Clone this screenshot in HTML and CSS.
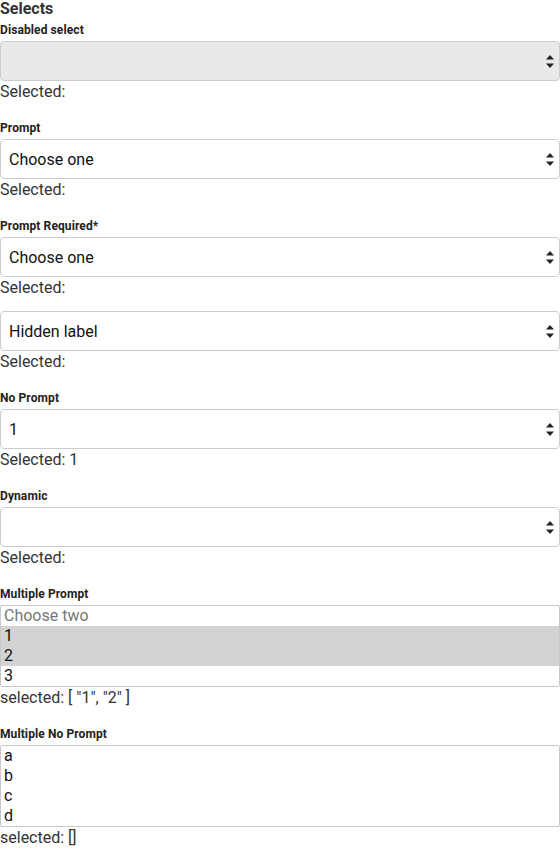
FILE: index.html
```html
<!DOCTYPE html>
<html>
<head>
<meta charset="utf-8">
<link rel="stylesheet" href="styles.css">
</head>
<body>
<main class="page">
  <h1 class="title">Selects</h1>

  <section class="field first">
    <div class="label">Disabled select</div>
    <div class="select disabled">
      <span class="value"></span>
      <svg class="arrows" width="8" height="13" viewBox="0 0 8 13"><polygon points="4,0 8,4.5 0,4.5"/><polygon points="0,8.5 8,8.5 4,13"/></svg>
    </div>
    <div class="selected">Selected:</div>
  </section>

  <section class="field">
    <div class="label">Prompt</div>
    <div class="select">
      <span class="value">Choose one</span>
      <svg class="arrows" width="8" height="13" viewBox="0 0 8 13"><polygon points="4,0 8,4.5 0,4.5"/><polygon points="0,8.5 8,8.5 4,13"/></svg>
    </div>
    <div class="selected">Selected:</div>
  </section>

  <section class="field">
    <div class="label">Prompt Required*</div>
    <div class="select">
      <span class="value">Choose one</span>
      <svg class="arrows" width="8" height="13" viewBox="0 0 8 13"><polygon points="4,0 8,4.5 0,4.5"/><polygon points="0,8.5 8,8.5 4,13"/></svg>
    </div>
    <div class="selected">Selected:</div>
  </section>

  <section class="field">
    <div class="select">
      <span class="value">Hidden label</span>
      <svg class="arrows" width="8" height="13" viewBox="0 0 8 13"><polygon points="4,0 8,4.5 0,4.5"/><polygon points="0,8.5 8,8.5 4,13"/></svg>
    </div>
    <div class="selected">Selected:</div>
  </section>

  <section class="field">
    <div class="label">No Prompt</div>
    <div class="select">
      <span class="value">1</span>
      <svg class="arrows" width="8" height="13" viewBox="0 0 8 13"><polygon points="4,0 8,4.5 0,4.5"/><polygon points="0,8.5 8,8.5 4,13"/></svg>
    </div>
    <div class="selected">Selected: 1</div>
  </section>

  <section class="field">
    <div class="label">Dynamic</div>
    <div class="select">
      <span class="value"></span>
      <svg class="arrows" width="8" height="13" viewBox="0 0 8 13"><polygon points="4,0 8,4.5 0,4.5"/><polygon points="0,8.5 8,8.5 4,13"/></svg>
    </div>
    <div class="selected">Selected:</div>
  </section>

  <section class="field">
    <div class="label">Multiple Prompt</div>
    <div class="listbox">
      <div class="option placeholder">Choose two</div>
      <div class="option on">1</div>
      <div class="option on">2</div>
      <div class="option">3</div>
    </div>
    <div class="selected">selected: [ "1", "2" ]</div>
  </section>

  <section class="field">
    <div class="label">Multiple No Prompt</div>
    <div class="listbox">
      <div class="option">a</div>
      <div class="option">b</div>
      <div class="option">c</div>
      <div class="option">d</div>
    </div>
    <div class="selected">selected: []</div>
  </section>
</main>
</body>
</html>
```

FILE: styles.css
```css
html, body {
  margin: 0;
  padding: 0;
  background: #ffffff;
}

body {
  font-family: Roboto, "Noto Sans", Arial, sans-serif;
  color: #222222;
  width: 560px;
}

.page {
  display: flex;
  flex-direction: column;
}

.title {
  margin: 0;
  font-size: 16px;
  font-weight: 700;
  line-height: 17px;
  color: #333333;
}

.field {
  display: flex;
  flex-direction: column;
  margin-top: 13px;
}

.field.first {
  margin-top: 0;
}

.label {
  font-size: 12px;
  font-weight: 700;
  line-height: 14px;
  padding-top: 6px;
  margin-bottom: 4px;
  color: #222222;
  letter-spacing: 0.1px;
}

.select {
  box-sizing: border-box;
  height: 40px;
  border: 1px solid #cccccc;
  border-radius: 4px;
  background: #ffffff;
  display: flex;
  align-items: center;
  justify-content: space-between;
  padding: 0 5px 0 8px;
  font-size: 16px;
  color: #111111;
}

.select.disabled {
  background: #e9e9e9;
}

.arrows {
  fill: #222222;
  display: block;
}

.selected {
  font-size: 16px;
  line-height: 20px;
  padding-top: 1px;
  color: #333333;
}

.listbox {
  box-sizing: border-box;
  border: 1px solid #c8c8c8;
  border-radius: 2px;
  display: flex;
  flex-direction: column;
}

.option {
  height: 20px;
  line-height: 20px;
  font-size: 16px;
  padding-left: 3px;
  color: #111111;
}

.option.placeholder {
  color: #777777;
}

.option.on {
  background: #d3d3d3;
}
```
